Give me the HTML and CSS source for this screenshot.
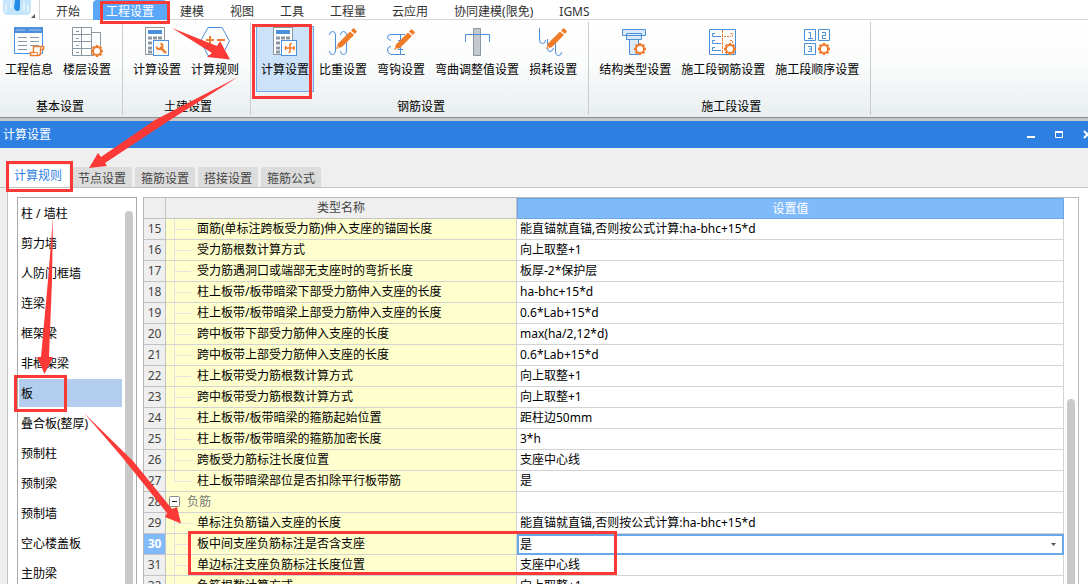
FILE: index.html
```html
<!DOCTYPE html>
<html lang="zh-CN">
<head>
<meta charset="utf-8">
<title>计算设置</title>
<link rel="stylesheet" href="styles.css">
</head>
<body>
<svg class="defs" aria-hidden="true">
  <defs>
    <g id="gear">
      <circle r="4" fill="#fff" stroke="#ed7d31" stroke-width="2"/>
      <g stroke="#ed7d31" stroke-width="2.4">
        <path d="M0-6V-4M0 4V6M-6 0H-4M4 0H6M-4.3-4.3L-3-3M3 3L4.3 4.3M-4.3 4.3L-3 3M3-3L4.3-4.3"/>
      </g>
    </g>
    <g id="pencil">
      <path d="M0 21L2 15.500 14 3.500 18 7 6 19Z" fill="#f07c28"/>
      <path d="M15 2.500L17.500 0 21 3.200 19 6Z" fill="#f07c28"/>
      <path d="M1.500 18.500L3 20" stroke="#fff" stroke-width="1"/>
    </g>
    <g id="calc">
      <rect x="4.500" y="1.500" width="19" height="27" fill="#fff" stroke="#8a97a3"/>
      <rect x="7" y="4" width="14" height="4" fill="#4a90dc"/>
      <path d="M7 12H22M7 17H22M7 22H12M7 26H12" stroke="#8a97a3" stroke-width="3" stroke-dasharray="4 1"/>
      <rect x="12.500" y="14.500" width="15" height="15" fill="#fff" stroke="#4a90dc"/>
    </g>
  </defs>
</svg>

<header class="menu">
  <div class="logo">
    <svg width="39" height="20" viewBox="0 0 39 20" aria-hidden="true">
      <path d="M3 0H31V10Q31 15 26 15H8Q3 15 3 10Z" fill="#c4e5fb"/>
      <path d="M6 4V12M11 1V8M24 2V11M28 5V12" stroke="#e3f3fd" stroke-width="2"/>
      <path d="M15 0H20V7Q20 11 17.500 11T14 8Z" fill="#238de5"/>
      <path d="M35 14V18H31Z" fill="#555"/>
    </svg>
  </div>
  <nav class="menu-items">
    <button>开始</button><button class="active">工程设置</button><button>建模</button><button>视图</button><button>工具</button><button>工程量</button><button>云应用</button><button>协同建模(限免)</button><button>IGMS</button>
  </nav>
</header>

<section class="ribbon">
  <div class="group">
    <div class="tools">
      <button><svg width="32" height="32" viewBox="0 0 32 32"><path d="M1.500 1.500H29.500V27.500H1.500Z" fill="#fff" stroke="#4a90dc"/><path d="M1 1H30V7H1Z" fill="#4a90dc"/><path d="M3 4H12M16 4H28" stroke="#9fc5f0"/><path d="M5 11.500H14M5 15.500H14M5 19.500H14M5 23.500H14M17 11.500H26M17 15.500H26M17 19.500H26" stroke="#8a97a3"/><path d="M20.500 20.500H30.500V23.500H27.500V27Q27.500 29.500 25 29.500H17.500V26.500H20.500Z" fill="#fff" stroke="#ed7d31" stroke-width="1.500"/><path d="M20.500 26.500H24.500V29M27.500 20.500V24" fill="none" stroke="#ed7d31"/></svg>工程信息</button>
      <button><svg width="32" height="32" viewBox="0 0 32 32"><path d="M1.500 1.500H20.500V29.500H1.500ZM10.500 1.500V29.500M1.500 8.500H20.500M1.500 15.500H20.500M1.500 22.500H20.500M20.500 6.500H29.500V20M20.500 29.500H23" fill="none" stroke="#8a97a3"/><path d="M5 5.500H8M5 12.500H8M5 19.500H8M5 26.500H8" stroke="#8a97a3"/><use href="#gear" x="26" y="25"/></svg>楼层设置</button>
    </div>
    <h2>基本设置</h2>
  </div>
  <div class="group">
    <div class="tools">
      <button><svg width="32" height="32" viewBox="0 0 32 32"><use href="#calc"/><path d="M19 21L25 27" stroke="#ed7d31" stroke-width="2.500"/><path d="M19.500 17.500A3 3 0 1 1 15.500 20.500" fill="none" stroke="#ed7d31" stroke-width="2"/></svg>计算设置</button>
      <button><svg width="32" height="32" viewBox="0 0 32 32"><path d="M9 1.500H23L30.500 15 23 29.500H9L1.500 15Z" fill="#fff" stroke="#4a90dc"/><path d="M7 14H15M11 10V18M18 14H26" stroke="#ed7d31" stroke-width="2"/></svg>计算规则</button>
    </div>
    <h2>土建设置</h2>
  </div>
  <div class="group">
    <div class="tools">
      <button class="selected"><svg width="32" height="32" viewBox="0 0 32 32"><use href="#calc"/><path d="M19.500 26.500Q21 26.500 21 25V19.500Q21 17.500 23 17.500M16 22H25.500M17 20Q15.500 22 17 24M24.500 20Q26 22 24.500 24" fill="none" stroke="#ed7d31" stroke-width="1.600"/></svg>计算设置</button>
      <button><svg width="32" height="32" viewBox="0 0 32 32"><path d="M2.500 9Q2.500 5.500 5.500 5.500T8.500 9V24Q8.500 28.500 5.500 28.500T2.500 25M13.500 9Q13.500 5.500 16.500 5.500T19.500 9V24Q19.500 28.500 16.500 28.500T13.500 25" fill="none" stroke="#4a90dc"/><use href="#pencil" x="9" y="2"/></svg>比重设置</button>
      <button><svg width="32" height="32" viewBox="0 0 32 32"><path d="M20 8.500H6Q2.500 8.500 2.500 11T6 14.500M6 20.500Q2.500 20.500 2.500 24T6 28.500H20M15.500 8V28M13 23.500H18M13 14.500H19" fill="none" stroke="#4a90dc"/><use href="#pencil" x="9" y="3"/></svg>弯钩设置</button>
      <button><svg width="32" height="32" viewBox="0 0 32 32"><path d="M12.500 2.500H19.500V29.500H12.500Z" fill="#c5c9ce" stroke="#8a97a3"/><path d="M4.500 16V8.500H28.500V16" fill="none" stroke="#4a90dc"/></svg>弯曲调整值设置</button>
      <button><svg width="32" height="32" viewBox="0 0 32 32"><path d="M2.500 2V14Q2.500 17.500 5.500 17.500T8.500 14M10.500 13V22Q10.500 25.500 13 25.500T16.500 22M18.500 15V25Q18.500 29.500 21.500 29.500T24.500 26" fill="none" stroke="#4a90dc"/><use href="#pencil" x="9" y="2"/></svg>损耗设置</button>
    </div>
    <h2>钢筋设置</h2>
  </div>
  <div class="group">
    <div class="tools">
      <button><svg width="32" height="32" viewBox="0 0 32 32"><path d="M10.500 13.500H19.500V28.500H10.500ZM3.500 3.500H26.500V9.500H3.500ZM7.500 7.500H22.500V13.500H7.500Z" fill="#dbe9f9" stroke="#4a90dc"/><use href="#gear" x="21" y="23"/></svg>结构类型设置</button>
      <button><svg width="32" height="32" viewBox="0 0 32 32"><path d="M2.500 3.500H28.500V28.500H2.500Z" fill="#fff" stroke="#4a90dc"/><path d="M8 7.500H5.500V10.500H14M8 14.500H5.500V17.500H14M8 21.500H5.500V24.500H14" fill="none" stroke="#4a90dc"/><path d="M15.500 4V28" stroke="#ed7d31" stroke-dasharray="3 1"/><path d="M17 10.500H24M25.500 10.500V7.500H23M25.500 17V14.500H23" fill="none" stroke="#ed7d31" stroke-dasharray="2 1"/><use href="#gear" x="23" y="23"/></svg>施工段钢筋设置</button>
      <button><svg width="32" height="32" viewBox="0 0 32 32"><path d="M3.500 3.500H14.500V14.500H3.500ZM17.500 3.500H28.500V14.500H17.500ZM3.500 17.500H14.500V28.500H3.500Z" fill="#fff" stroke="#4a90dc"/><path d="M7.500 6.500H9.500V12M7 12.500H12M21 6.500H24.500V9.500H21.500V12.500H25M7 20.500H10.500V25.500H7M8 23H10" fill="none" stroke="#4a90dc"/><use href="#gear" x="23" y="23"/></svg>施工段顺序设置</button>
    </div>
    <h2>施工段设置</h2>
  </div>
</section>

<main class="dialog">
  <div class="titlebar">
    <h1>计算设置</h1>
    <div class="window-controls">
      <button aria-label="最小化"><svg width="9" height="9" viewBox="0 0 9 9"><path d="M0 7H8" stroke="#fff" stroke-width="2"/></svg></button>
      <button aria-label="最大化"><svg width="9" height="9" viewBox="0 0 9 9"><path d="M.5 1.500V7.500H7.500V1.500Z" fill="none" stroke="#fff"/><path d="M0 2H8" stroke="#fff" stroke-width="2"/></svg></button>
      <button aria-label="关闭"><svg width="9" height="9" viewBox="0 0 9 9"><path d="M1 1L8 8M8 1L1 8" stroke="#fff" stroke-width="2"/></svg></button>
    </div>
  </div>

  <div class="tabs" role="tablist">
    <button role="tab" aria-selected="true">计算规则</button>
    <button role="tab" aria-selected="false">节点设置</button>
    <button role="tab" aria-selected="false">箍筋设置</button>
    <button role="tab" aria-selected="false">搭接设置</button>
    <button role="tab" aria-selected="false">箍筋公式</button>
  </div>

  <div class="pane">
    <aside class="components">
      <div class="component-list">
        <button>柱 / 墙柱</button>
        <button>剪力墙</button>
        <button>人防门框墙</button>
        <button>连梁</button>
        <button>框架梁</button>
        <button>非框架梁</button>
        <button class="current">板</button>
        <button>叠合板(整厚)</button>
        <button>预制柱</button>
        <button>预制梁</button>
        <button>预制墙</button>
        <button>空心楼盖板</button>
        <button>主肋梁</button>
      </div>
      <div class="scroll list-scroll"></div>
    </aside>

    <div class="grid">
      <table>
        <colgroup><col class="col-no"><col class="col-name"><col></colgroup>
        <thead><tr><th></th><th>类型名称</th><th class="value-head">设置值</th></tr></thead>
        <tbody>
          <tr><th>15</th><td>面筋(单标注跨板受力筋)伸入支座的锚固长度</td><td>能直锚就直锚,否则按公式计算:ha-bhc+15*d</td></tr>
          <tr><th>16</th><td>受力筋根数计算方式</td><td>向上取整+1</td></tr>
          <tr><th>17</th><td>受力筋遇洞口或端部无支座时的弯折长度</td><td>板厚-2*保护层</td></tr>
          <tr><th>18</th><td>柱上板带/板带暗梁下部受力筋伸入支座的长度</td><td>ha-bhc+15*d</td></tr>
          <tr><th>19</th><td>柱上板带/板带暗梁上部受力筋伸入支座的长度</td><td>0.6*Lab+15*d</td></tr>
          <tr><th>20</th><td>跨中板带下部受力筋伸入支座的长度</td><td>max(ha/2,12*d)</td></tr>
          <tr><th>21</th><td>跨中板带上部受力筋伸入支座的长度</td><td>0.6*Lab+15*d</td></tr>
          <tr><th>22</th><td>柱上板带受力筋根数计算方式</td><td>向上取整+1</td></tr>
          <tr><th>23</th><td>跨中板带受力筋根数计算方式</td><td>向上取整+1</td></tr>
          <tr><th>24</th><td>柱上板带/板带暗梁的箍筋起始位置</td><td>距柱边50mm</td></tr>
          <tr><th>25</th><td>柱上板带/板带暗梁的箍筋加密长度</td><td>3*h</td></tr>
          <tr><th>26</th><td>跨板受力筋标注长度位置</td><td>支座中心线</td></tr>
          <tr class="last"><th>27</th><td>柱上板带暗梁部位是否扣除平行板带筋</td><td>是</td></tr>
          <tr class="section"><th>28</th><td><button class="collapse" aria-label="折叠负筋"><svg width="11" height="11" viewBox="0 0 11 11"><rect x=".5" y=".5" width="10" height="10" rx="1" fill="#fff" stroke="#888"/><path d="M3 5.500H8" stroke="#222"/></svg></button>负筋</td><td></td></tr>
          <tr><th>29</th><td>单标注负筋锚入支座的长度</td><td>能直锚就直锚,否则按公式计算:ha-bhc+15*d</td></tr>
          <tr class="editing"><th>30</th><td id="row30">板中间支座负筋标注是否含支座</td><td><div class="picker"><select aria-labelledby="row30"><option>是</option><option>否</option></select><svg width="5" height="3" viewBox="0 0 5 3"><path d="M0 0H5L2.500 3Z" fill="#555"/></svg></div></td></tr>
          <tr><th>31</th><td>单边标注支座负筋标注长度位置</td><td>支座中心线</td></tr>
          <tr><th>32</th><td>负筋根数计算方式</td><td>向上取整+1</td></tr>
        </tbody>
      </table>
      <div class="scroll grid-scroll"></div>
    </div>
  </div>
</main>

<svg class="annotations" width="1088" height="584" viewBox="0 0 1088 584" aria-hidden="true">
  <g fill="none" stroke="#fb3a38" stroke-width="3">
    <rect x="101.500" y="2.500" width="67" height="20"/>
    <rect x="253.500" y="25.500" width="57" height="72"/>
    <rect x="7.500" y="162.500" width="64" height="28"/>
    <rect x="15.500" y="376.500" width="50" height="34"/>
    <rect x="189.500" y="532.500" width="426" height="41"/>
  </g>
  <g fill="#fb3a38">
    <path d="M172 28L217 46 220 41 230 59.500 207 57 212 53Z"/>
    <path d="M238 77L170 120 105 163 107 166 89 168 98 153 101 157 155 120Z"/>
    <path d="M53 218L52 280 49 357 53 357 44.500 374 37 357 41 357 48 280Z"/>
    <path d="M84 413L133 461 172 509 177 507 181 523.500 165 517 167 513 122 457Z"/>
  </g>
</svg>
</body>
</html>
```
FILE: styles.css
```css
* { box-sizing: border-box; }

body {
  margin: 0;
  height: 100vh;
  overflow: hidden;
  position: relative;
  display: flex;
  flex-direction: column;
  background: #fff;
  color: #000;
  font: 12px/20px "Noto Sans", "Noto Sans CJK SC", sans-serif;
}

button, select {
  font: inherit;
  color: inherit;
  margin: 0;
  padding: 0;
  border: 0;
  background: none;
  white-space: nowrap;
}

h1, h2 { margin: 0; font: inherit; }
svg { display: block; flex: none; }
.defs { position: absolute; width: 0; height: 0; }

/* Menu bar */
.menu { display: flex; flex: none; height: 20px; color: #333; }
.logo { width: 40px; border-right: 1px solid #d5d5d5; }
.menu-items { flex: 1; display: flex; padding-left: 3px; border-bottom: 1px solid #d5d5d5; }
.menu-items button { padding: 2px 13px 0; height: 20px; }
.menu-items .active { background: #5aa7fa; color: #fff; border-radius: 4px 4px 0 0; }

/* Ribbon */
.ribbon {
  display: flex;
  flex: none;
  height: 101px;
  padding: 2px 0 3px;
  background: linear-gradient(#fff, #fbfcfc 45%, #e7edee);
  border-bottom: 3px solid #c5c7c9;
  box-shadow: inset 0 -1px #898c90;
}
.group {
  display: flex;
  flex-direction: column;
  justify-content: space-between;
  padding: 4px 6px 0 5px;
  border-right: 1px solid #c9cccd;
}
.group:first-child { padding-left: 0; }
.group h2 { padding-left: 4px; text-align: center; line-height: 16px; }
.tools { display: flex; }
.tools button {
  display: flex;
  flex-direction: column;
  align-items: center;
  height: 66px;
  padding: 0 5px;
  line-height: 24px;
}
.tools .selected { background: #cce2f9; box-shadow: inset 0 0 0 1px #6eaaea; }

/* Dialog */
.dialog { flex: 1; min-height: 0; display: flex; flex-direction: column; background: #efefef; }
.titlebar {
  display: flex;
  flex: none;
  justify-content: space-between;
  align-items: center;
  height: 27px;
  padding-left: 3px;
  overflow: hidden;
  background: #2d80e1;
  color: #fff;
}
.window-controls { display: flex; margin-right: -13px; }
.window-controls button { width: 28px; height: 27px; display: grid; place-items: center; }

.tabs {
  display: flex;
  flex: none;
  align-items: flex-end;
  gap: 3px;
  height: 40px;
  padding-left: 7px;
  border-bottom: 1px solid #c3c3c3;
}
.tabs button {
  height: 20px;
  padding: 2px 6px 0;
  background: #dcdcdc;
  color: #444;
  border-radius: 3px 3px 0 0;
}
.tabs [aria-selected="true"] { height: 22px; padding: 0 7px; background: #fff; color: #2d80e1; }

.pane {
  flex: 1;
  min-height: 0;
  display: flex;
  gap: 6px;
  margin-left: 7px;
  padding: 9px 9px 0;
  background: #fff;
  border-left: 1px solid #c3c3c3;
}

/* Component list */
.components {
  flex: none;
  display: flex;
  width: 120px;
  padding: 1px 3px 0 1px;
  border: solid #a9a9a9;
  border-width: 1px 1px 0;
}
.component-list { flex: 1; display: flex; flex-direction: column; gap: 2px; padding-right: 3px; }
.component-list button { flex: none; height: 28px; padding: 2px 0 0 2px; text-align: left; }
.component-list .current { background: #b3cdee; }
.scroll { flex: none; width: 8px; background: #c9c9c9; border-radius: 4px 4px 0 0; }
.list-scroll { margin-top: 12px; }

/* Settings grid */
.grid {
  flex: 1;
  min-width: 0;
  display: flex;
  align-items: flex-start;
  gap: 3px;
  padding-right: 3px;
  border: solid #b9b9b9;
  border-width: 1px 1px 0;
}
.grid-scroll { margin-top: 201px; height: 100%; }
table { flex: 1; table-layout: fixed; width: 100%; border-collapse: separate; border-spacing: 0; }
.col-no { width: 22px; }
.col-name { width: 351px; }
th, td {
  height: 21px;
  padding: 0;
  line-height: 20px;
  font-weight: 400;
  white-space: nowrap;
  overflow: hidden;
  border: solid #d3d3d3;
  border-width: 0 1px 1px 0;
}
th { background: #efefef; color: #444; border-color: #c3c3c3; text-align: center; }
thead .value-head { background: #80bafa; color: #fff; line-height: 19px; border: 1px solid #69a8e8; }
td { padding-left: 3px; }
td:nth-child(2) {
  padding-left: 31px;
  background:
    linear-gradient(#e2e2e2, #e2e2e2) 8px 0 / 1px 100% no-repeat,
    linear-gradient(#e2e2e2, #e2e2e2) 9px 10px / 16px 1px no-repeat,
    #ffffcd;
}
.last td:nth-child(2) { background-size: 1px 10px, 16px 1px, auto; }
.section td:nth-child(2) { padding-left: 3px; background: #ffffcd; color: #777; }
.collapse { margin-right: 7px; vertical-align: -1px; }
.editing th { background: #80bafa; color: #fff; font-weight: 700; }
.editing td:last-child { padding: 0; border: 0; }
.picker {
  display: flex;
  align-items: center;
  height: 21px;
  padding-right: 6px;
  border: 2px solid #69a8e8;
}
select { flex: 1; appearance: none; height: 17px; padding-left: 1px; line-height: 17px; outline: 0; }

/* Callouts drawn over the window */
.annotations { position: absolute; left: 0; top: 0; pointer-events: none; }
```
